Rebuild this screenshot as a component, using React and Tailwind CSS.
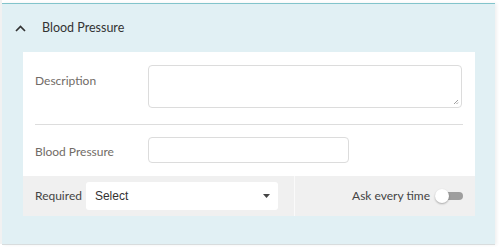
import React from "react";

export default function App() {
  return (
    <div className="w-[504px] h-[249px] bg-white relative overflow-hidden" style={{ fontFamily: "Lato, 'Open Sans', sans-serif" }}>
      <div className="absolute left-0 top-0 w-[2px] h-[244px] bg-[#f1f1f1]" />
      <div className="ml-[2px] mt-[3px] w-[493px] h-[242px] bg-[#e1f0f4] border-t-[1px] border-[#82c4cb] border-b-[1px] border-b-[#d8dcdd] shadow-[2px_0_3px_rgba(0,0,0,0.06)] flex flex-col">
        <div className="h-[48px] flex items-center pl-[13px]">
          <svg width="11" height="7" viewBox="0 0 11 7" className="mt-[1px]">
            <path d="M1 6 L5.5 1.5 L10 6" stroke="#333" strokeWidth="1.7" fill="none" />
          </svg>
          <span className="ml-[16px] text-[12.5px] text-[#333]">Blood Pressure</span>
        </div>
        <div className="ml-[21px] mr-[20px] bg-white flex flex-col">
          <div className="flex pt-[13px] px-[12px]">
            <div className="w-[113px] text-[12px] text-[#716b66] pt-[7px]">Description</div>
            <div className="w-[314px] h-[43px] border border-[#dcdcdc] rounded-[4px] relative">
              <svg width="6" height="6" viewBox="0 0 6 6" className="absolute right-[2px] bottom-[2px]">
                <path d="M5 1 L1 5 M5 3.5 L3.5 5" stroke="#888" strokeWidth="0.8" />
              </svg>
            </div>
          </div>
          <div className="mx-[12px] mt-[16px] h-px bg-[#dddddd]" />
          <div className="flex items-center px-[12px] mt-[12px] mb-[13px]">
            <div className="w-[113px] text-[12px] text-[#716b66] pt-[3px]">Blood Pressure</div>
            <div className="w-[201px] h-[26px] border border-[#dcdcdc] rounded-[4px]" />
          </div>
          <div className="h-[40px] bg-[#f0f0f0] flex">
            <div className="w-[271px] flex items-center pl-[12px]">
              <span className="text-[12px] text-[#444]">Required</span>
              <div className="ml-[4px] w-[192px] h-[28px] bg-white rounded-[3px] flex items-center justify-between pl-[9px] pr-[8px]">
                <span className="text-[12px] text-[#333]" style={{ fontFamily: "'Liberation Sans', Arial, sans-serif" }}>Select</span>
                <svg width="7" height="4" viewBox="0 0 7 4"><path d="M0 0 H7 L3.5 4 Z" fill="#444" /></svg>
              </div>
            </div>
            <div className="w-px bg-[#fafafa]" />
            <div className="flex-1 flex items-center justify-end pr-[12px]">
              <span className="text-[12px] text-[#444]">Ask every time</span>
              <div className="ml-[5px] relative w-[28px] h-[14px] flex items-center">
                <div className="absolute left-[6px] right-0 h-[8px] rounded-full bg-[#9e9e9e]" />
                <div className="absolute left-0 w-[14px] h-[14px] rounded-full bg-white shadow-[0_1px_2px_rgba(0,0,0,0.3)]" />
              </div>
            </div>
          </div>
        </div>
      </div>
    </div>
  );
}
